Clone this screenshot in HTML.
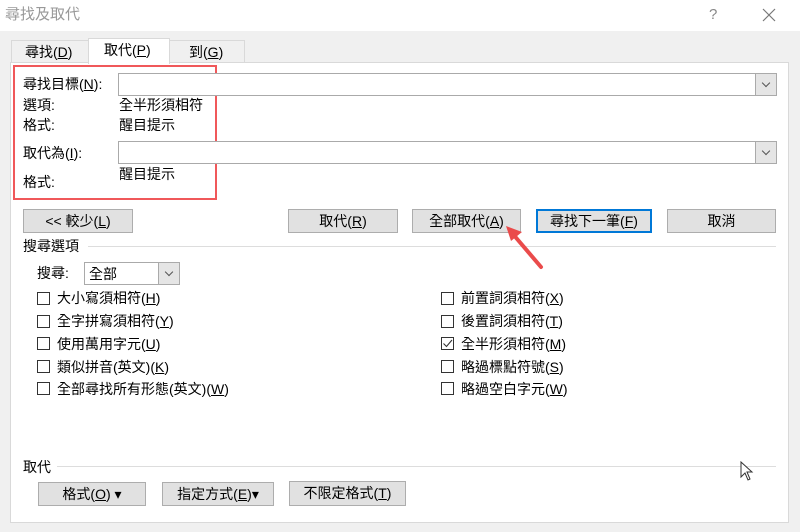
<!DOCTYPE html>
<html><head><meta charset="utf-8"><style>
*{box-sizing:border-box;margin:0;padding:0}
body{width:800px;height:532px;background:#f0f0f0;font-family:"Liberation Sans","Noto Sans CJK TC",sans-serif;font-size:14px;color:#000;position:relative;overflow:hidden}
.a{position:absolute;white-space:nowrap;line-height:16px}
.btn{position:absolute;background:#e1e1e1;border:1px solid #adadad;text-align:center;line-height:22px;height:24px}
.inp{position:absolute;background:#fff;border:1px solid #aaa;height:23px}
.dd{position:absolute;right:0;top:0;width:21px;height:21px;background:#e5e5e5;border-left:1px solid #aaa}
.dd:after{content:"";position:absolute;left:7px;top:6px;width:5px;height:5px;border-right:1px solid #555;border-bottom:1px solid #555;transform:rotate(45deg)}
.cb{position:absolute;width:13px;height:13px;border:1px solid #333;background:#fff}
.line{position:absolute;height:1px;background:#ddd}
</style></head><body>
<div style="position:absolute;left:0;top:0;width:800px;height:31px;background:#fff"></div>
<div class="a" style="left:5px;top:7px;color:#999;font-size:15px">尋找及取代</div>
<div class="a" style="left:709px;top:7px;color:#888;font-size:15px">?</div>
<svg style="position:absolute;left:762px;top:8px" width="14" height="14"><path d="M1 1L13 13M13 1L1 13" stroke="#777" stroke-width="1.2"/></svg>
<div style="position:absolute;left:11px;top:40px;width:234px;height:23px;background:#f0f0f0;border:1px solid #d9d9d9"></div>
<div style="position:absolute;left:88px;top:38px;width:82px;height:26px;background:#fff;border:1px solid #d9d9d9;border-bottom:none;z-index:2"></div>
<div class="a" style="left:25px;top:44px">尋找(<u>D</u>)</div>
<div class="a" style="left:104px;top:42px;z-index:3">取代(<u>P</u>)</div>
<div class="a" style="left:189px;top:44px">到(<u>G</u>)</div>
<div style="position:absolute;left:10px;top:62px;width:779px;height:461px;background:#fff;border:1px solid #d9d9d9"></div>
<div style="position:absolute;left:13px;top:65px;width:204px;height:135px;border:2px solid #f0585a"></div>
<div class="a" style="left:23px;top:76px">尋找目標(<u>N</u>):</div>
<div class="inp" style="left:118px;top:73px;width:659px"><div class="dd"></div></div>
<div class="a" style="left:23px;top:97px">選項:</div><div class="a" style="left:119px;top:97px">全半形須相符</div>
<div class="a" style="left:23px;top:117px">格式:</div><div class="a" style="left:119px;top:117px">醒目提示</div>
<div class="a" style="left:23px;top:145px">取代為(<u>I</u>):</div>
<div class="inp" style="left:118px;top:141px;width:659px"><div class="dd"></div></div>
<div class="a" style="left:23px;top:174px">格式:</div><div class="a" style="left:119px;top:166px">醒目提示</div>
<div class="btn" style="left:23px;top:209px;width:110px">&lt;&lt; 較少(<u>L</u>)</div>
<div class="btn" style="left:288px;top:209px;width:110px">取代(<u>R</u>)</div>
<div class="btn" style="left:412px;top:209px;width:109px">全部取代(<u>A</u>)</div>
<div class="btn" style="left:536px;top:209px;width:116px;border:2px solid #0078d7;line-height:20px">尋找下一筆(<u>F</u>)</div>
<div class="btn" style="left:667px;top:209px;width:109px">取消</div>
<div class="a" style="left:23px;top:238px">搜尋選項</div><div class="line" style="left:88px;top:246px;width:688px"></div>
<div class="a" style="left:37px;top:265px">搜尋:</div>
<div class="inp" style="left:84px;top:262px;width:96px"><div class="a" style="left:4px;top:3px">全部</div><div class="dd"></div></div>
<div class="cb" style="left:37px;top:292px"></div><div class="a" style="left:57px;top:290px">大小寫須相符(<u>H</u>)</div>
<div class="cb" style="left:37px;top:315px"></div><div class="a" style="left:57px;top:313px">全字拼寫須相符(<u>Y</u>)</div>
<div class="cb" style="left:37px;top:337px"></div><div class="a" style="left:57px;top:336px">使用萬用字元(<u>U</u>)</div>
<div class="cb" style="left:37px;top:360px"></div><div class="a" style="left:57px;top:359px">類似拼音(英文)(<u>K</u>)</div>
<div class="cb" style="left:37px;top:382px"></div><div class="a" style="left:57px;top:381px">全部尋找所有形態(英文)(<u>W</u>)</div>
<div class="cb" style="left:441px;top:292px"></div><div class="a" style="left:461px;top:290px">前置詞須相符(<u>X</u>)</div>
<div class="cb" style="left:441px;top:315px"></div><div class="a" style="left:461px;top:313px">後置詞須相符(<u>T</u>)</div>
<div class="cb" style="left:441px;top:337px"><svg width="11" height="11" style="position:absolute;left:0;top:0"><path d="M1.5 5.5L4.5 8.5L10 2" stroke="#333" fill="none" stroke-width="1.1"/></svg></div><div class="a" style="left:461px;top:336px">全半形須相符(<u>M</u>)</div>
<div class="cb" style="left:441px;top:360px"></div><div class="a" style="left:461px;top:359px">略過標點符號(<u>S</u>)</div>
<div class="cb" style="left:441px;top:382px"></div><div class="a" style="left:461px;top:381px">略過空白字元(<u>W</u>)</div>
<svg style="position:absolute;left:500px;top:220px" width="50" height="55"><path d="M41 47L12 13" stroke="#ea4b4b" stroke-width="4" stroke-linecap="round"/><path d="M6 6L22 12L11 21Z" fill="#ea4b4b"/></svg>
<div class="a" style="left:23px;top:459px">取代</div><div class="line" style="left:57px;top:466px;width:719px"></div>
<svg style="position:absolute;left:740px;top:461px" width="14" height="22"><path d="M1 1L1 16L5 12L8 19L10 18L7 11L12 11Z" fill="#fff" stroke="#333" stroke-width="1"/></svg>
<div class="btn" style="left:38px;top:482px;width:108px">格式(<u>O</u>) ▾</div>
<div class="btn" style="left:162px;top:482px;width:112px">指定方式(<u>E</u>)▾</div>
<div class="btn" style="left:289px;top:481px;width:117px;height:25px">不限定格式(<u>T</u>)</div>
</body></html>
